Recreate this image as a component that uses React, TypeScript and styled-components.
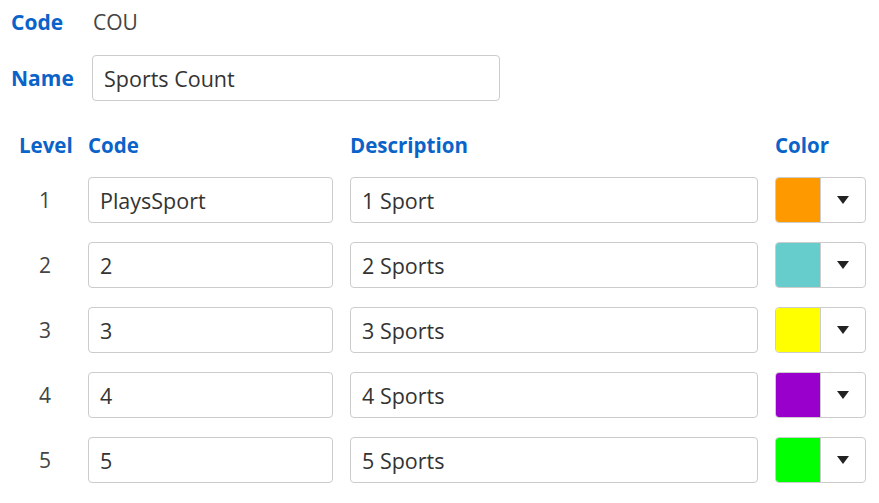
import styled, {createGlobalStyle} from "styled-components";
import {useState} from "react";
import * as React from "react";

const GlobalStyle = createGlobalStyle`
    html, body {
        margin: 0;
        padding: 0;
        background: #ffffff;
        font-family: "Open Sans", "Liberation Sans", sans-serif;
        color: #333333;
    }
    * {
        box-sizing: border-box;
    }
`;

const Page = styled.div`
    padding: 7px 0 0 11px;
    width: 879px;
`;

const TopForm = styled.div`
    display: grid;
    grid-template-columns: 81px 408px;
    grid-template-rows: 30px 46px;
    row-gap: 18px;
    align-items: center;
`;

const Label = styled.span`
    color: #0a63c9;
    font-weight: 700;
    font-size: 21px;
`;

const Value = styled.span`
    font-size: 21px;
    color: #444444;
    padding-left: 1px;
`;

const TextInput = styled.input<{ $width?: number }>`
    height: 46px;
    width: ${p => (p.$width ? `${p.$width}px` : "100%")};
    border: 1px solid #cccccc;
    border-radius: 4px;
    padding: 0 11px;
    font-family: inherit;
    font-size: 21.5px;
    color: #333333;
    background: #ffffff;
    &:focus {
        outline: none;
        border-color: #0a63c9;
    }
`;

const LevelGrid = styled.div`
    display: grid;
    grid-template-columns: 60px 245px 408px 91px;
    grid-template-rows: 27px repeat(5, 46px);
    column-gap: 17px;
    row-gap: 19px;
    align-items: center;
    margin-top: 30px;
`;

const Header = styled(Label)<{ $center?: boolean }>`
    font-size: 20.5px;
    text-align: ${p => (p.$center ? "center" : "left")};
    padding-left: ${p => (p.$center ? "8px" : "0")};
`;

const LevelNum = styled.span`
    font-size: 21px;
    color: #444444;
    text-align: center;
    padding-left: 8px;
`;

const ColorPicker = styled.button`
    display: flex;
    height: 46px;
    width: 91px;
    padding: 0;
    border: 1px solid #cccccc;
    border-radius: 4px;
    background: #ffffff;
    overflow: hidden;
    cursor: pointer;
`;

const Swatch = styled.span<{ $color: string }>`
    width: 45px;
    height: 100%;
    background: ${p => p.$color};
    border-right: 1px solid #cccccc;
`;

const Caret = styled.span`
    flex: 1;
    display: flex;
    align-items: center;
    justify-content: center;
    &::after {
        content: "";
        width: 0;
        height: 0;
        border-left: 6px solid transparent;
        border-right: 6px solid transparent;
        border-top: 8px solid #222222;
    }
`;

type Level = { code: string; description: string; color: string };

const initialLevels: Level[] = [
    {code: "PlaysSport", description: "1 Sport", color: "#ff9900"},
    {code: "2", description: "2 Sports", color: "#66cccc"},
    {code: "3", description: "3 Sports", color: "#ffff00"},
    {code: "4", description: "4 Sports", color: "#9900cc"},
    {code: "5", description: "5 Sports", color: "#00ff00"},
];

export default function App() {
    const [name, setName] = useState("Sports Count");
    const [levels, setLevels] = useState<Level[]>(initialLevels);

    const onLevelChange = (i: number, field: "code" | "description") =>
        (e: React.ChangeEvent<HTMLInputElement>) => {
            const next = [...levels];
            next[i] = {...next[i], [field]: e.target.value};
            setLevels(next);
        };

    return (
        <>
            <GlobalStyle/>
            <Page>
                <TopForm>
                    <Label>Code</Label>
                    <Value>COU</Value>
                    <Label>Name</Label>
                    <TextInput value={name} onChange={e => setName(e.target.value)}/>
                </TopForm>
                <LevelGrid>
                    <Header $center>Level</Header>
                    <Header>Code</Header>
                    <Header>Description</Header>
                    <Header>Color</Header>
                    {levels.map((lvl, i) => (
                        <React.Fragment key={i}>
                            <LevelNum>{i + 1}</LevelNum>
                            <TextInput value={lvl.code} onChange={onLevelChange(i, "code")}/>
                            <TextInput value={lvl.description} onChange={onLevelChange(i, "description")}/>
                            <ColorPicker type={"button"}>
                                <Swatch $color={lvl.color}/>
                                <Caret/>
                            </ColorPicker>
                        </React.Fragment>
                    ))}
                </LevelGrid>
            </Page>
        </>
    );
}
